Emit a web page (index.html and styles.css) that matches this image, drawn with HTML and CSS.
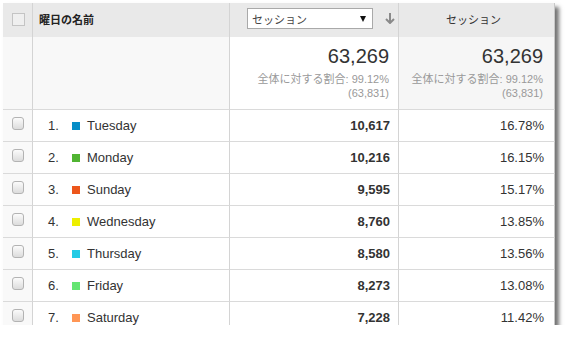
FILE: index.html
```html
<!DOCTYPE html>
<html lang="ja">
<head>
<meta charset="utf-8">
<link rel="stylesheet" href="styles.css">
</head>
<body>
<div class="table">
  <div class="cell hd c1"><span class="hcheck"></span></div>
  <div class="cell hd c2"><span class="htitle">曜日の名前</span></div>
  <div class="cell hd c3">
    <div class="select"><span>セッション</span><span class="tri"></span></div>
    <svg class="sort" width="10" height="11" viewBox="0 0 10 11"><path d="M5 0V10M1 6L5 10L9 6" fill="none" stroke="#8a8a8a" stroke-width="2"/></svg>
  </div>
  <div class="cell hd c4"><span class="htext">セッション</span></div>

  <div class="cell sum c1"></div>
  <div class="cell sum c2"></div>
  <div class="cell sum c3 white">
    <div class="big">63,269</div>
    <div class="sub">全体に対する割合: 99.12%</div>
    <div class="sub">(63,831)</div>
  </div>
  <div class="cell sum c4 grey">
    <div class="big">63,269</div>
    <div class="sub">全体に対する割合: 99.12%</div>
    <div class="sub">(63,831)</div>
  </div>

  <div class="cell row c1"><span class="rcheck"></span></div>
  <div class="cell row c2"><span class="num">1.</span><span class="sw" style="background:#058dc7"></span>Tuesday</div>
  <div class="cell row c3 val">10,617</div>
  <div class="cell row c4 pct">16.78%</div>

  <div class="cell row c1"><span class="rcheck"></span></div>
  <div class="cell row c2"><span class="num">2.</span><span class="sw" style="background:#50b432"></span>Monday</div>
  <div class="cell row c3 val">10,216</div>
  <div class="cell row c4 pct">16.15%</div>

  <div class="cell row c1"><span class="rcheck"></span></div>
  <div class="cell row c2"><span class="num">3.</span><span class="sw" style="background:#ed561b"></span>Sunday</div>
  <div class="cell row c3 val">9,595</div>
  <div class="cell row c4 pct">15.17%</div>

  <div class="cell row c1"><span class="rcheck"></span></div>
  <div class="cell row c2"><span class="num">4.</span><span class="sw" style="background:#edef00"></span>Wednesday</div>
  <div class="cell row c3 val">8,760</div>
  <div class="cell row c4 pct">13.85%</div>

  <div class="cell row c1"><span class="rcheck"></span></div>
  <div class="cell row c2"><span class="num">5.</span><span class="sw" style="background:#24cbe5"></span>Thursday</div>
  <div class="cell row c3 val">8,580</div>
  <div class="cell row c4 pct">13.56%</div>

  <div class="cell row c1"><span class="rcheck"></span></div>
  <div class="cell row c2"><span class="num">6.</span><span class="sw" style="background:#64e572"></span>Friday</div>
  <div class="cell row c3 val">8,273</div>
  <div class="cell row c4 pct">13.08%</div>

  <div class="cell row c1"><span class="rcheck"></span></div>
  <div class="cell row c2"><span class="num">7.</span><span class="sw" style="background:#ff9655"></span>Saturday</div>
  <div class="cell row c3 val">7,228</div>
  <div class="cell row c4 pct">11.42%</div>
</div>
</body>
</html>
```
FILE: styles.css
```css
html, body {
  margin: 0;
  padding: 0;
  background: #fff;
}
body {
  padding: 3px 0 0 3px;
  font-family: "Liberation Sans", Arial, "Noto Sans CJK JP", sans-serif;
  color: #333;
}
.table {
  width: 552px;
  height: 322px;
  overflow: hidden;
  display: grid;
  grid-template-columns: 30px 197px 169px 156px;
  grid-template-rows: 34px 73px repeat(7, 32px);
  box-shadow: 4px 4px 4px rgba(0, 0, 0, 0.55);
  background: #fff;
}
.cell {
  box-sizing: border-box;
  border-right: 1px solid #d4d4d4;
  border-bottom: 1px solid #dadada;
}
.c4 { border-right-color: #c8c8c8; }
.hd {
  background: #e9e9e9;
  border-bottom: none;
  display: flex;
  align-items: center;
}
.hd.c1 { padding-left: 9px; }
.hcheck {
  width: 11px;
  height: 11px;
  border: 1px solid #c4c4c4;
  background: #efefef;
  margin-top: -1px;
}
.htitle {
  padding-left: 6px;
  font-family: "Noto Sans CJK JP", sans-serif;
  font-size: 11px;
  font-weight: 700;
  color: #222;
  margin-top: -2px;
}
.hd.c3 { padding-left: 17px; }
.select {
  box-sizing: border-box;
  width: 126px;
  height: 21px;
  margin-top: -3px;
  border: 1px solid #a9a9a9;
  background: #fff;
  display: flex;
  align-items: center;
  justify-content: space-between;
  padding: 0 6px 0 4px;
  font-family: "Noto Sans CJK JP", sans-serif;
  font-size: 11px;
  color: #444;
}
.tri {
  width: 0;
  height: 0;
  border-left: 3px solid transparent;
  border-right: 3px solid transparent;
  border-top: 6px solid #111;
}
.sort { margin-left: 12px; margin-top: -3px; }
.hd.c4 { justify-content: center; }
.htext {
  font-family: "Noto Sans CJK JP", sans-serif;
  font-size: 11px;
  color: #333;
  margin-top: -3px;
  margin-left: -6px;
}
.sum {
  background: #f8f8f8;
  text-align: right;
  padding: 6px 10px 0 0;
}
.sum.white { background: #fff; padding-right: 9px; }
.sum.grey { background: #f6f6f6; padding-right: 11px; }
.big {
  font-size: 20px;
  line-height: 26px;
  color: #333;
}
.sub {
  font-family: "Liberation Sans", Arial, "Noto Sans CJK JP", sans-serif;
  font-size: 11px;
  line-height: 14px;
  color: #999;
}
.big + .sub { margin-top: 3px; }
.row {
  display: flex;
  align-items: center;
  font-size: 13px;
}
.row.c1 {
  background: #f9f9f9;
  padding-left: 9px;
  align-items: flex-start;
  padding-top: 7px;
}
.rcheck {
  box-sizing: border-box;
  width: 12px;
  height: 13px;
  border: 1px solid #b3b3b3;
  border-radius: 3px;
  background: linear-gradient(#fbfbfb, #dcdcdc);
}
.row.c2 { padding-left: 15px; color: #333; }
.num { width: 24px; }
.sw {
  width: 8px;
  height: 8px;
  margin-right: 7px;
}
.val {
  justify-content: flex-end;
  font-weight: 700;
  padding-right: 8px;
}
.pct {
  justify-content: flex-end;
  padding-right: 10px;
}
```
